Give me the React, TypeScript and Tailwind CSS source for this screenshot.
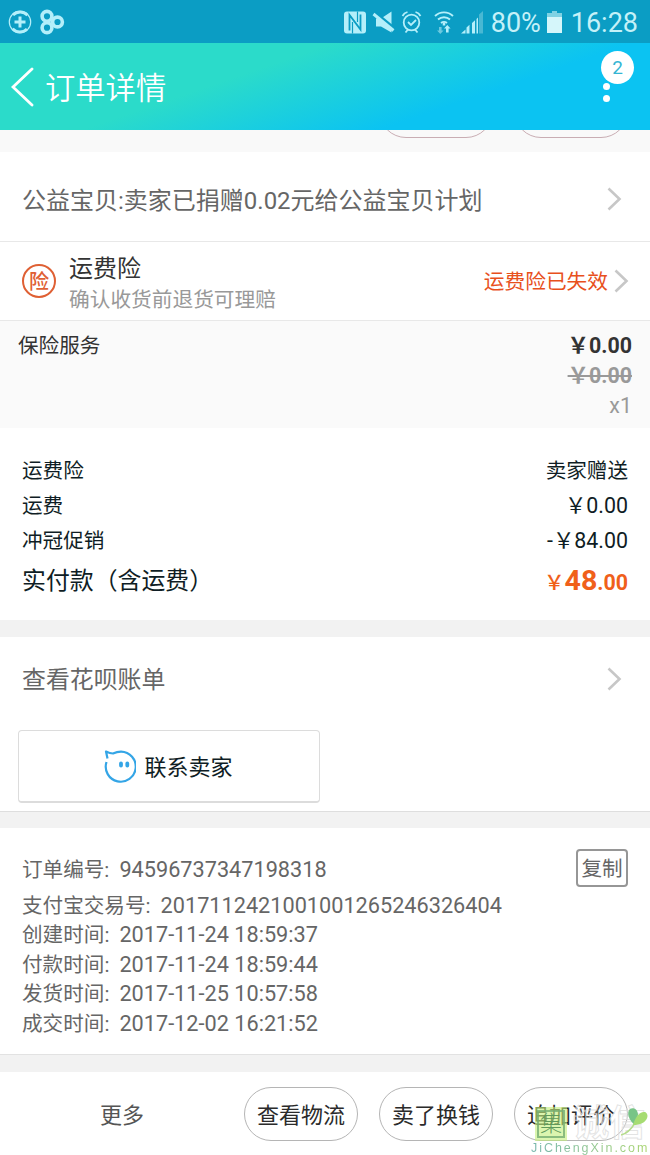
import type { ReactNode } from "react";

const Chevron = () => (
  <svg width="15" height="26" viewBox="0 0 15 26" fill="none" stroke="#c7c7c7" strokeWidth="2.6">
    <path d="M1.5 2.5 L12.5 13 L1.5 23.5" />
  </svg>
);

const StatusBar = () => (
  <div className="flex h-[43px] items-center justify-between bg-[#0b9dc4] pr-3 pl-2 text-[#c4f1f8]">
    <div className="flex items-center gap-[7px]">
      <svg width="24" height="24" viewBox="0 0 24 24" fill="none" stroke="#b4effa">
        <circle cx="12" cy="12" r="10.7" strokeWidth="1.2" />
        <path d="M5 5 A10 10 0 0 1 19.5 5.2 M19 19 A10 10 0 0 1 4.5 18.8" strokeWidth="3" />
        <path d="M12 6.5v11M6.5 12h11" strokeWidth="3" />
      </svg>
      <svg width="26" height="26" viewBox="0 0 26 26" fill="none" stroke="#b4effa" strokeWidth="3.6">
        <circle cx="8" cy="7.3" r="4.9" />
        <circle cx="18.5" cy="13" r="4.9" />
        <circle cx="8" cy="18.7" r="4.9" />
      </svg>
    </div>
    <div className="flex items-center">
      <svg width="140" height="26" viewBox="0 0 140 26" fill="none" stroke="#b4effa">
        {/* nfc */}
        <rect x="1" y="2.5" width="22" height="22" rx="3" fill="#b4effa" stroke="none" />
        <path d="M6.5 21.5V6l11 14.5V5.5" stroke="#0b9dc4" strokeWidth="1.8" />
        <path d="M9.5 24.5V13" stroke="#0b9dc4" strokeWidth="1.2" />
        <path d="M14.5 2.5V13" stroke="#0b9dc4" strokeWidth="1.2" />
        {/* muted speaker */}
        <path d="M33 9.5h5l10.5-7v21l-10.5-6h-5z" fill="#b4effa" stroke="none" />
        <path d="M32 3.5 L52 20" stroke="#0b9dc4" strokeWidth="3" />
        <path d="M30.5 5 L50.5 21.5" strokeWidth="3" />
        {/* alarm */}
        <circle cx="68.5" cy="13.5" r="7.8" strokeWidth="1.8" />
        <path
          d="M65 13l3 3 5-5M59.5 7a8 8 0 0 1 5-4M77.5 7a8 8 0 0 0-5-4M62.5 23.5l2.5-3M74.5 23.5l-2.5-3"
          strokeWidth="1.8"
        />
        {/* wifi */}
        <path d="M92 7a13 13 0 0 1 18 0M95 10.5a9 9 0 0 1 12 0M98 14a5 5 0 0 1 6 0" strokeWidth="1.9" />
        <path d="M101 13.5v3" strokeWidth="2.5" />
        <path d="M96 18v3.5h-2l3.3 3.5 3.3-3.5h-2V18z" fill="#6cc9df" stroke="none" />
        <path d="M103 23.5v-4h-2l3.3-3.5 3.3 3.5h-2v4z" fill="#b4effa" stroke="none" />
        {/* signal */}
        <path d="M118 24.5l4.5-4v4zM123.5 24.5v-6l3-2.7v8.7zM129 24.5V14l3-2.7v13.2z" fill="#b4effa" stroke="none" />
        <path d="M133.5 24.5V10l1.500-1.500v16z" fill="#b4effa" stroke="none" />
        <path d="M136 24.5V5.5l4-3.5v22.5z" fill="#49b8d3" stroke="none" />
      </svg>
      <span className="ml-2 w-[51px] pt-[3px] text-[27px] leading-none whitespace-nowrap">80%</span>
      <svg className="ml-[5px]" width="15" height="22" viewBox="0 0 15 22">
        <path d="M5 0h5v2h5v20H0V2h5z" fill="#d5f6fa" />
        <path d="M5 0h5v2h5v4H0V2h5z" fill="#7fd2e3" />
      </svg>
      <span className="ml-[9px] pt-[3px] text-[27px] leading-none">16:28</span>
    </div>
  </div>
);

const Header = () => (
  <header className="flex h-[87px] items-center justify-between bg-[linear-gradient(161deg,#2bdbca_37%,#0bc3f2_70%)] pl-[11px] text-white">
    <div className="flex items-center gap-[11px]">
      <svg width="23" height="40" viewBox="0 0 23 40" fill="none" stroke="#fff" strokeWidth="2.8" strokeLinecap="round">
        <path d="M21 2 L2 20 L21 38" />
      </svg>
      <h1 className="pt-1 text-[30.3px] leading-[44px] font-[350]">订单详情</h1>
    </div>
    <div className="relative mr-10 flex h-full flex-col justify-end gap-[5px] pb-7">
      <i className="size-[7px] rounded-full bg-white" />
      <i className="size-[7px] rounded-full bg-white" />
      <span className="absolute top-2 left-[-2px] flex size-[33px] items-center justify-center rounded-full bg-white pt-[2px] text-[19px] text-[#35b5d3]">
        2
      </span>
    </div>
  </header>
);

const PriceRow = ({ label, children }: { label: string; children: ReactNode }) => (
  <div className="flex h-[35px] items-center justify-between text-[20.6px]">
    <span>{label}</span>
    <span>{children}</span>
  </div>
);

const Pill = ({ children }: { children: ReactNode }) => (
  <button className="flex h-[54px] w-[114px] shrink-0 items-center justify-center rounded-full border border-[#b5b5b5] pt-[3px] text-[22px] text-[#2b2b2b]">
    {children}
  </button>
);

const times = [
  ["支付宝交易号", "2017112421001001265246326404"],
  ["创建时间", "2017-11-24 18:59:37"],
  ["付款时间", "2017-11-24 18:59:44"],
  ["发货时间", "2017-11-25 10:57:58"],
  ["成交时间", "2017-12-02 16:21:52"],
];

const Watermark = () => (
  <div className="absolute top-[1106px] left-[530px] h-[49px] w-[120px]">
    <div className="flex h-[36px] items-center pl-[5px]">
      <span className="flex h-[34px] w-[32px] shrink-0 items-center justify-center bg-[#c3ee7a]/60">
        <span className="flex size-[28px] items-center justify-center border-2 border-[#76ae72]/80 text-[22px] leading-none font-light text-[#5f9a5c]">
          集
        </span>
      </span>
      <span className="ml-[6px] text-[36px] leading-[36px] font-bold whitespace-nowrap text-white/20 [-webkit-text-stroke:1px_#dcdcdccc]">
        诚信
      </span>
    </div>
    <svg className="absolute top-0 left-[91px]" width="29" height="32" viewBox="0 0 29 32">
      <path d="M0 29 Q8 27 14 17" stroke="#b5dc8c" strokeWidth="1.5" fill="none" />
      <path d="M14 19 C8 15 5 6 9 3 C13 1 17 4 17 9 Z" fill="#78c487" />
      <path d="M12 19 C14 11 19 5 24 6 C29 8 27 19 12 19 Z" fill="#a6dc72" />
    </svg>
    <div className="bg-linear-to-r from-[#78b6ae] to-[#a9d56d] bg-clip-text pl-px font-['Liberation_Sans'] text-[12.5px] leading-[13px] tracking-[1.95px] whitespace-nowrap text-transparent">
      JiChengXin.com
    </div>
  </div>
);

export const App = () => {
  return (
    <main className="relative flex h-[1155px] w-[650px] flex-col overflow-hidden bg-white font-[Roboto,'Noto_Sans_CJK_SC',sans-serif] text-[#0f1d24]">
      <StatusBar />
      <Header />

      {/* buttons scrolled under the header */}
      <div className="flex h-[22px] items-end justify-end gap-[21px] overflow-hidden bg-[#f9f9f9] pr-[22px] pb-[14px]">
        <div className="h-[54px] w-[114px] shrink-0 rounded-full border border-[#c9adb3]" />
        <div className="h-[54px] w-[114px] shrink-0 rounded-full border border-[#c9adb3]" />
      </div>

      <section className="flex h-[90px] items-center justify-between border-b border-[#e8e8e8] pt-[5px] pr-7 pl-[22px]">
        <span className="pt-[3px] text-[24px] leading-8 text-[#666]">公益宝贝:卖家已捐赠0.02元给公益宝贝计划</span>
        <Chevron />
      </section>

      <section className="flex h-[79px] items-center border-b border-[#e8e8e8] pr-[21px] pl-[22px]">
        <span className="flex size-[34px] items-center justify-center rounded-full border-2 border-[#df6034] pt-px text-[20px] leading-none font-medium text-[#df6034]">
          险
        </span>
        <div className="ml-[13px] flex-1 pt-[5px]">
          <div className="text-[24px] leading-8 text-[#333]">运费险</div>
          <div className="text-[20.7px] leading-[30px] text-[#999]">确认收货前退货可理赔</div>
        </div>
        <span className="mr-[6px] pt-1 text-[20.7px] text-[#e8501c]">运费险已失效</span>
        <Chevron />
      </section>

      <section className="flex h-[107px] justify-between bg-[#fafafa] px-[18px] pt-[10px] text-[20.6px] leading-[30px] text-[#333]">
        <span>保险服务</span>
        <div className="text-right text-[21.4px]">
          <div className="font-bold">￥0.00</div>
          <div className="font-bold text-[#999] line-through">￥0.00</div>
          <div className="text-[#999]">x1</div>
        </div>
      </section>

      <section className="h-48 px-[22px] pt-[26px]">
        <PriceRow label="运费险">卖家赠送</PriceRow>
        <PriceRow label="运费">
          <span className="text-[21.4px]">￥0.00</span>
        </PriceRow>
        <PriceRow label="冲冠促销">
          <span className="text-[21.4px]">-￥84.00</span>
        </PriceRow>
        <div className="flex h-[44px] items-center justify-between text-[23.9px]">
          <span className="pt-px">实付款（含运费）</span>
          <span className="text-[21.4px] font-bold text-[#f0601a]">
            <span className="text-[20.6px] font-medium">￥</span>
            <span className="text-[28.5px]">48</span>.00
          </span>
        </div>
      </section>

      <div className="h-[17px] bg-[#f2f2f2]" />

      <section className="h-[175px] border-b border-[#dedede]">
        <div className="flex h-[93px] items-center justify-between pr-7 pb-[10px] pl-[22px]">
          <span className="pt-[5px] text-[23.9px] text-[#666]">查看花呗账单</span>
          <Chevron />
        </div>
        <button className="ml-[18px] flex h-[73px] w-[302px] items-center justify-center gap-[8px] rounded-[4px] border border-b-2 border-[#dcdcdc] pr-px text-[22px]">
          <svg width="32" height="33" viewBox="0 0 32 33" fill="none" stroke="#34a5e6" strokeWidth="2.2">
            <path d="M3.5 8.5 L2 1.5 Q6 3.5 9 3.5 Q13 1.7 17 1.7 A15 15 0 1 1 2.500 12" strokeLinejoin="round" />
            <path d="M17 13.5v2M23.3 13.5v2" strokeWidth="3.8" strokeLinecap="round" />
          </svg>
          <span className="pt-[2px]">联系卖家</span>
        </button>
      </section>

      <div className="h-4 bg-[#f2f2f2]" />

      <section className="h-[227px] border-b border-[#e2e2e2] px-[22px] pt-[21px] text-[20.6px] leading-[29.4px] text-[#666]">
        <div className="flex h-[42px] items-center justify-between">
          <span>
            订单编号:<span className="ml-[10px] text-[21.7px]">94596737347198318</span>
          </span>
          <button className="-mt-1 flex h-[38px] w-[52px] items-center justify-center rounded-[4px] border-2 border-[#969696] pt-[3px]">
            复制
          </button>
        </div>
        {times.map(([label, value]) => (
          <div key={label} className="h-[29.4px]">
            {label}:<span className="ml-[10px] text-[21.7px]">{value}</span>
          </div>
        ))}
      </section>

      <div className="h-[17px] bg-[#f2f2f2]" />

      <footer className="flex flex-1 items-center justify-end gap-[21px] pr-[22px]">
        <span className="mr-[79px] pt-[3px] text-[22px] text-[#555]">更多</span>
        <Pill>查看物流</Pill>
        <Pill>卖了换钱</Pill>
        <Pill>追加评价</Pill>
      </footer>

      <Watermark />
    </main>
  );
};

export default App;
